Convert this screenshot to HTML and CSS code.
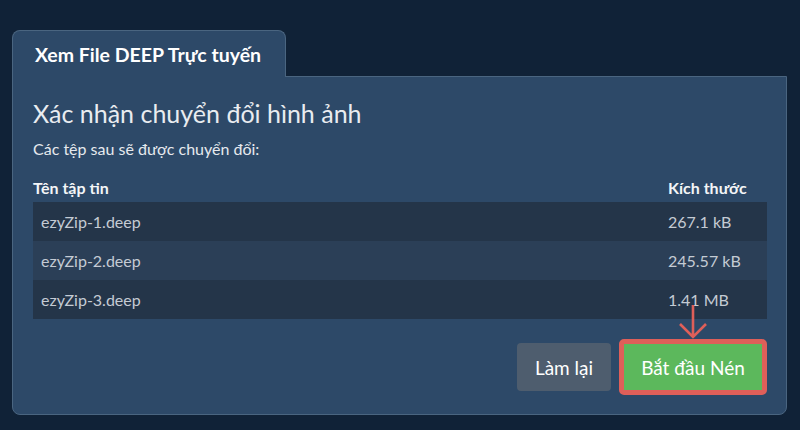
FILE: index.html
```html
<!DOCTYPE html>
<html lang="vi">
<head>
<meta charset="utf-8">
<title>Xem File DEEP Trực tuyến</title>
<link rel="stylesheet" href="styles.css">
</head>
<body>
<div class="wrap">
  <div class="tab">Xem File DEEP Trực tuyến</div>
  <div class="panel">
    <h1 class="title">Xác nhận chuyển đổi hình ảnh</h1>
    <p class="sub">Các tệp sau sẽ được chuyển đổi:</p>
    <div class="table">
      <div class="row head"><span class="name">Tên tập tin</span><span class="size">Kích thước</span></div>
      <div class="row dark"><span class="name">ezyZip-1.deep</span><span class="size">267.1 kB</span></div>
      <div class="row light"><span class="name">ezyZip-2.deep</span><span class="size">245.57 kB</span></div>
      <div class="row dark"><span class="name">ezyZip-3.deep</span><span class="size">1.41 MB</span></div>
    </div>
    <div class="actions">
      <button class="btn reset">Làm lại</button>
      <div class="highlight">
        <svg class="arrow" width="30" height="36" viewBox="0 0 30 36">
          <path d="M15 1 V33 M2 20 L15 33 L28 20" fill="none" stroke="#df5f59" stroke-width="2.6"/>
        </svg>
        <button class="btn start">Bắt đầu Nén</button>
      </div>
    </div>
  </div>
</div>
</body>
</html>
```
FILE: styles.css
```css
* { box-sizing: border-box; }
html, body { margin: 0; padding: 0; }
body {
  background: #102237;
  font-family: Lato, "Noto Sans", sans-serif;
  color: #e8ebef;
  width: 800px;
  height: 430px;
  overflow: hidden;
}
.wrap {
  padding: 30px 0 0 12px;
  width: 787px;
}
.tab {
  position: relative;
  z-index: 1;
  width: 274px;
  height: 47px;
  margin-bottom: -1px;
  background: #2d4968;
  border: 1px solid #4a6580;
  border-bottom: none;
  border-radius: 8px 8px 0 0;
  font-weight: 700;
  font-size: 19.5px;
  color: #ffffff;
  padding: 12px 0 0 22px;
}
.panel {
  background: #2d4968;
  border: 1px solid #4a6580;
  border-radius: 0 0 8px 8px;
  padding: 20px 20px 19px 20px;
}
.title {
  margin: 0;
  font-weight: 400;
  font-size: 25px;
  line-height: 32px;
  color: #e9ecf0;
}
.sub {
  margin: 10px 0 0 0;
  font-size: 16px;
  line-height: 20px;
  color: #e6e9ee;
}
.table {
  margin-top: 19px;
  width: 734px;
}
.row {
  display: flex;
  height: 39px;
  align-items: center;
  font-size: 16px;
  color: #c4cbd4;
}
.row .name { flex: 1; padding-left: 8px; }
.row .size { width: 99px; }
.row.head {
  height: 24px;
  align-items: flex-start;
  font-weight: 700;
  color: #f3f5f7;
}
.row.head .name { padding-left: 0; }
.row.dark { background: #243549; }
.row.light { background: #2b3f57; }
.actions {
  margin-top: 20px;
  display: flex;
  justify-content: flex-end;
  align-items: center;
  gap: 8px;
  width: 734px;
}
.btn {
  font-family: Lato, "Noto Sans", sans-serif;
  font-weight: 400;
  font-size: 19px;
  color: #ffffff;
  border: none;
  border-radius: 4px;
  cursor: pointer;
}
.reset {
  width: 94px;
  height: 48px;
  background: #4e5d6e;
}
.highlight {
  position: relative;
  border: 5px solid #df5f59;
  border-radius: 5px;
  display: flex;
}
.start {
  width: 138px;
  height: 46px;
  background: #5cb85c;
  border-radius: 0;
}
.arrow {
  position: absolute;
  left: 50%;
  margin-left: -15px;
  bottom: 100%;
  margin-bottom: 4px;
}
```
